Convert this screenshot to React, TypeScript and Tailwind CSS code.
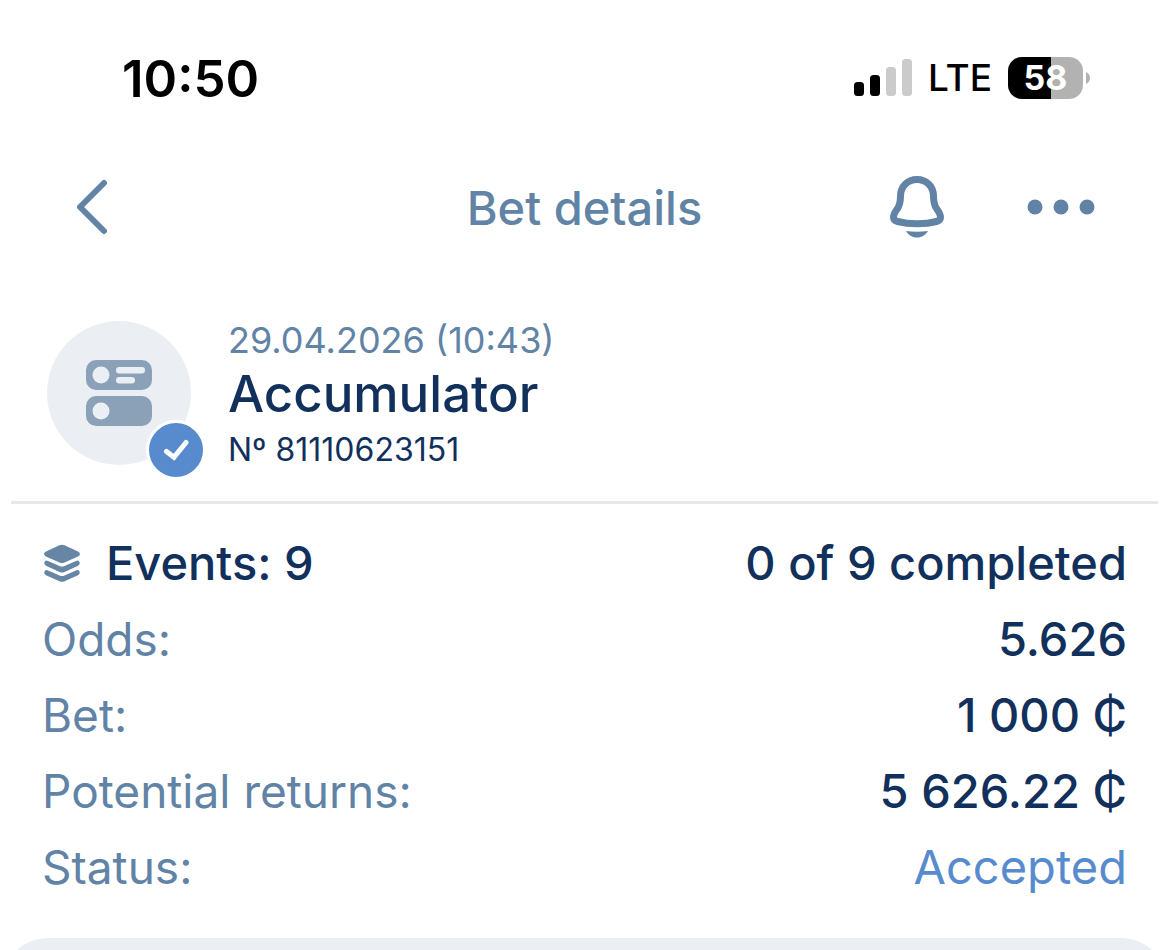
type Row = {
  label: string;
  value: string;
  valueClass?: string;
};

const rows: Row[] = [
  { label: 'Odds:', value: '5.626' },
  { label: 'Bet:', value: '1 000 ₵' },
  { label: 'Potential returns:', value: '5 626.22 ₵' },
  { label: 'Status:', value: 'Accepted', valueClass: 'text-[47px] text-[#588bce]' },
];

function StatusBar() {
  return (
    <div className="flex h-[156px] shrink-0 items-center justify-between pl-[122px] pr-[79px] text-black">
      <span className="text-[51px] font-semibold leading-none">10:50</span>
      <div className="flex items-center">
        <svg className="h-[38px] w-[58px]" viewBox="0 0 58 38" aria-hidden="true">
          <rect x="0" y="23" width="10" height="14" rx="3.500" fill="#000" />
          <rect x="16" y="16" width="10" height="21" rx="3.500" fill="#000" />
          <rect x="32" y="8" width="10" height="29" rx="3.500" fill="#cbcbcb" />
          <rect x="48" y="0" width="10" height="37" rx="3.500" fill="#cbcbcb" />
        </svg>
        <span className="mx-4 text-[37px] font-medium leading-[44px]">LTE</span>
        {/* Battery */}
        <div className="flex items-center">
          <div className="flex h-[42px] w-[75px] items-center justify-center rounded-[14px] bg-linear-to-r from-black from-[57%] to-[#b2b2b2] to-[57%] text-[34px] font-bold leading-none text-white">
            58
          </div>
          <svg className="ml-[3px] h-3 w-1" viewBox="0 0 4 12" aria-hidden="true">
            <path d="M0 0c2.4 1 4 3.200 4 6s-1.600 5-4 6z" fill="#b2b2b2" />
          </svg>
        </div>
      </div>
    </div>
  );
}

function Header() {
  return (
    <header className="grid h-[102px] shrink-0 grid-cols-[1fr_auto_1fr] items-center px-[74px] text-[#6183a6]">
      <button type="button" aria-label="Back" className="justify-self-start">
        <svg className="h-14 w-9" viewBox="0 0 36 56" fill="none" stroke="currentColor" strokeWidth="6" strokeLinecap="round" strokeLinejoin="round">
          <path d="M30 4L6 28l24 24" />
        </svg>
      </button>
      <h1 className="text-[47px] font-medium leading-none">Bet details</h1>
      <div className="flex items-center gap-[83px] justify-self-end">
        <button type="button" aria-label="Notifications">
          <svg className="h-[62px] w-[54px]" viewBox="0 0 54 62" fill="none">
            <path
              d="M27 3.500C17.500 3.500 10.500 10.500 10.500 20C10.500 25 10.300 28.500 7.500 32.500C5.300 35.600 3.500 38.500 3.500 41C3.500 43.600 5 44.900 7.500 45.500C19 48.600 35 48.600 46.500 45.500C49 44.900 50.500 43.600 50.500 41C50.500 38.500 48.700 35.600 46.500 32.500C43.700 28.500 43.500 25 43.500 20C43.500 10.500 36.500 3.500 27 3.500Z"
              stroke="currentColor"
              strokeWidth="7"
              strokeLinejoin="round"
            />
            <path d="M16 55C23 56 31 56 38 55C35.500 59 32 61.500 27 61.500S18.500 59 16 55Z" fill="currentColor" />
          </svg>
        </button>
        <button type="button" aria-label="More">
          <svg className="h-4 w-[68px]" viewBox="0 0 68 16" fill="currentColor">
            <circle cx="8" cy="8" r="7.500" />
            <circle cx="34" cy="8" r="7.500" />
            <circle cx="60" cy="8" r="7.500" />
          </svg>
        </button>
      </div>
    </header>
  );
}

function BetIcon() {
  return (
    <div className="relative flex size-36 shrink-0 items-center justify-center rounded-full bg-[#ebeff4]">
      <svg className="size-[66px]" viewBox="0 0 66 66" fill="#8aa1b8" aria-hidden="true">
        <rect width="66" height="30" rx="10" />
        <rect y="36" width="66" height="30" rx="10" />
        <g fill="#ebeff4">
          <circle cx="15" cy="15" r="8.500" />
          <circle cx="15" cy="51" r="8.500" />
          <rect x="30" y="7" width="29" height="6.500" rx="3.250" />
          <rect x="30" y="17" width="19" height="6.500" rx="3.250" />
        </g>
      </svg>
      {/* Accepted badge */}
      <div className="absolute -bottom-[15px] -right-[15px] flex size-[60px] items-center justify-center rounded-full border-3 border-white bg-[#588bce]">
        <svg className="h-[22px] w-[26px]" viewBox="0 0 26 22" fill="none" stroke="#fff" strokeWidth="5" strokeLinecap="round" aria-hidden="true">
          <path d="M3.500 12.500L11 18.300L23 3.500" />
        </svg>
      </div>
    </div>
  );
}

function LayersIcon() {
  return (
    <svg className="h-[38px] w-10" viewBox="0 0 36 38" fill="#6786a5" aria-hidden="true">
      <path d="M15.500 1.300Q18 .2 20.500 1.300L33.500 7.200Q36 8.500 36 10Q36 11.500 33.500 12.800L20.500 18.500Q18 19.600 15.500 18.500L2.500 12.800Q0 11.500 0 10Q0 8.500 2.500 7.200Z" />
      <path d="M1.500 16.800Q2.500 16.200 4 16.900L15.500 22Q18 23.100 20.500 22L32 16.900Q33.500 16.200 34.500 16.800Q36 18 35.700 19.800Q35.300 21.200 33.500 22L20.500 28Q18 29.100 15.500 28L2.500 22Q.7 21.200.3 19.800Q0 18 1.500 16.800Z" />
      <path d="M1.500 26.300Q2.500 25.700 4 26.400L15.500 31.500Q18 32.600 20.500 31.500L32 26.400Q33.500 25.700 34.500 26.300Q36 27.500 35.700 29.300Q35.300 30.700 33.500 31.500L20.500 37.300Q18 38.400 15.500 37.300L2.500 31.500Q.7 30.700.3 29.300Q0 27.500 1.500 26.300Z" />
    </svg>
  );
}

export default function App() {
  return (
    <div className="flex h-screen flex-col overflow-hidden bg-white font-['Inter',sans-serif]">
      <StatusBar />
      <Header />

      <main className="shrink-0">
        {/* Bet summary */}
        <section className="mx-[11px] flex items-center gap-[37px] border-b-3 border-[#e6e8eb] px-9 pt-[58px] pb-[31px]">
          <BetIcon />
          <div className="text-[#12305c]">
            <p className="text-[36px] leading-[48px] text-[#6183a6]">29.04.2026 (10:43)</p>
            <h2 className="text-[51px] font-medium leading-[60px]">Accumulator</h2>
            <p className="mt-1.5 text-[32px] leading-[40px]">Nº 81110623151</p>
          </div>
        </section>

        {/* Details */}
        <section className="px-[42px] pt-[21px] pb-[33px] leading-[76px]">
          <div className="flex items-center justify-between text-[47px] font-medium text-[#12305c]">
            <div className="flex items-center gap-6">
              <LayersIcon />
              <span>Events: 9</span>
            </div>
            <span>0 of 9 completed</span>
          </div>
          <dl>
            {rows.map((row) => (
              <div key={row.label} className="flex justify-between">
                <dt className="text-[46px] leading-[76px] text-[#6183a6]">{row.label}</dt>
                <dd className={row.valueClass ?? 'text-[47px] font-medium text-[#12305c]'}>{row.value}</dd>
              </div>
            ))}
          </dl>
        </section>
      </main>

      <section aria-label="Events" className="h-24 shrink-0 rounded-t-[48px] bg-[#ebeff4]" />
    </div>
  );
}
